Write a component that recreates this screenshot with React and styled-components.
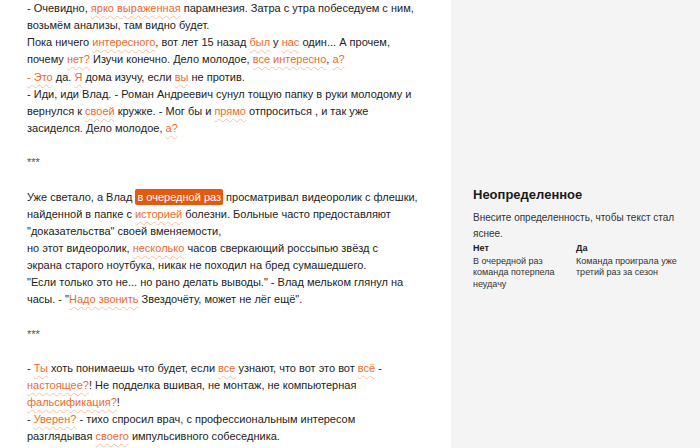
import React from 'react';
import styled, { createGlobalStyle } from 'styled-components';

const GlobalStyle = createGlobalStyle`
  html, body {
    margin: 0;
    padding: 0;
    background: #fff;
  }
  body {
    font-family: "Liberation Sans", Arial, sans-serif;
    overflow: hidden;
  }
`

/* two columns: the text and the grey side bar */
const Page = styled.div`
  display: grid;
  grid-template-columns: 451px 1fr;
  width: 700px;
  height: 448px;
  overflow: hidden;
`

const Article = styled.div`
  padding: 0 0 0 27px;
  font-size: 11px;
  line-height: 17.14px;
  color: #232323;
  white-space: nowrap;
`

const Block = styled.p`
  margin: 0 0 17.14px 0;
`

const Stars = styled.p`
  margin: 0 0 17.14px 0;
  color: #555;
`

/* word flagged by the checker */
const Flag = styled.span`
  color: #ec6b2d;
  text-decoration: underline wavy #f7c1a6;
  text-decoration-thickness: 1px;
  text-underline-offset: 3px;
`

/* the currently selected fragment */
const Selected = styled.span`
  background: #e25a10;
  color: #fff;
  border-radius: 2px;
  padding: 2px 2px;
`

const Sidebar = styled.aside`
  background: #f4f4f4;
  padding: 185px 22px 0 22px;
`

const Card = styled.div`
  color: #333;
`

const CardTitle = styled.h3`
  margin: 0 0 5px 0;
  font-size: 13px;
  font-weight: bold;
  color: #1a1a1a;
  line-height: 20px;
`

const CardText = styled.p`
  margin: 0 0 2px 0;
  font-size: 10px;
  line-height: 15.5px;
  color: #333;
`

const Examples = styled.div`
  display: grid;
  grid-template-columns: 103px 1fr;
  font-size: 9px;
  line-height: 11.7px;
  color: #333;
`

const ExampleHead = styled.div`
  font-weight: bold;
  color: #1a1a1a;
  margin-bottom: 1px;
`

const Example = ({ head, children }) => (
  <div>
    <ExampleHead>{head}</ExampleHead>
    <div>{children}</div>
  </div>
)

const App = () => {
  return (
    <>
      <GlobalStyle />
      <Page>
        <Article>
          <Block>
            - Очевидно, <Flag>ярко выраженная</Flag> парамнезия. Затра с утра побеседуем с ним,<br />
            возьмём анализы, там видно будет.<br />
            Пока ничего <Flag>интересного</Flag>, вот лет 15 назад <Flag>был</Flag> у <Flag>нас</Flag> один... А прочем,<br />
            почему <Flag>нет?</Flag> Изучи конечно. Дело молодое, <Flag>все интересно</Flag>, <Flag>а?</Flag><br />
            <Flag>- Это</Flag> да. <Flag>Я</Flag> дома изучу, если <Flag>вы</Flag> не против.<br />
            - Иди, иди Влад. - Роман Андреевич сунул тощую папку в руки молодому и<br />
            вернулся к <Flag>своей</Flag> кружке. - Мог бы и <Flag>прямо</Flag> отпроситься , и так уже<br />
            засиделся. Дело молодое, <Flag>а?</Flag>
          </Block>
          <Stars>***</Stars>
          <Block>
            Уже светало, а Влад <Selected>в очередной раз</Selected> просматривал видеоролик с флешки,<br />
            найденной в папке с <Flag>историей</Flag> болезни. Больные часто предоставляют<br />
            "доказательства" своей вменяемости,<br />
            но этот видеоролик, <Flag>несколько</Flag> часов сверкающий россыпью звёзд с<br />
            экрана старого ноутбука, никак не походил на бред сумашедшего.<br />
            "Если только это не... но рано делать выводы." - Влад мельком глянул на<br />
            часы. - "<Flag>Надо звонить</Flag> Звездочёту, может не лёг ещё".
          </Block>
          <Stars>***</Stars>
          <Block>
            - <Flag>Ты</Flag> хоть понимаешь что будет, если <Flag>все</Flag> узнают, что вот это вот <Flag>всё</Flag> -<br />
            <Flag>настоящее?</Flag>! Не подделка вшивая, не монтаж, не компьютерная<br />
            <Flag>фальсификация?</Flag>!<br />
            - <Flag>Уверен?</Flag> - тихо спросил врач, с профессиональным интересом<br />
            разглядывая <Flag>своего</Flag> импульсивного собеседника.
          </Block>
        </Article>
        <Sidebar>
          <Card>
            <CardTitle>Неопределенное</CardTitle>
            <CardText>
              Внесите определенность, чтобы текст стал<br />
              яснее.
            </CardText>
            <Examples>
              <Example head="Нет">
                В очередной раз<br />
                команда потерпела<br />
                неудачу
              </Example>
              <Example head="Да">
                Команда проиграла уже<br />
                третий раз за сезон
              </Example>
            </Examples>
          </Card>
        </Sidebar>
      </Page>
    </>
  )
}

export default App;
